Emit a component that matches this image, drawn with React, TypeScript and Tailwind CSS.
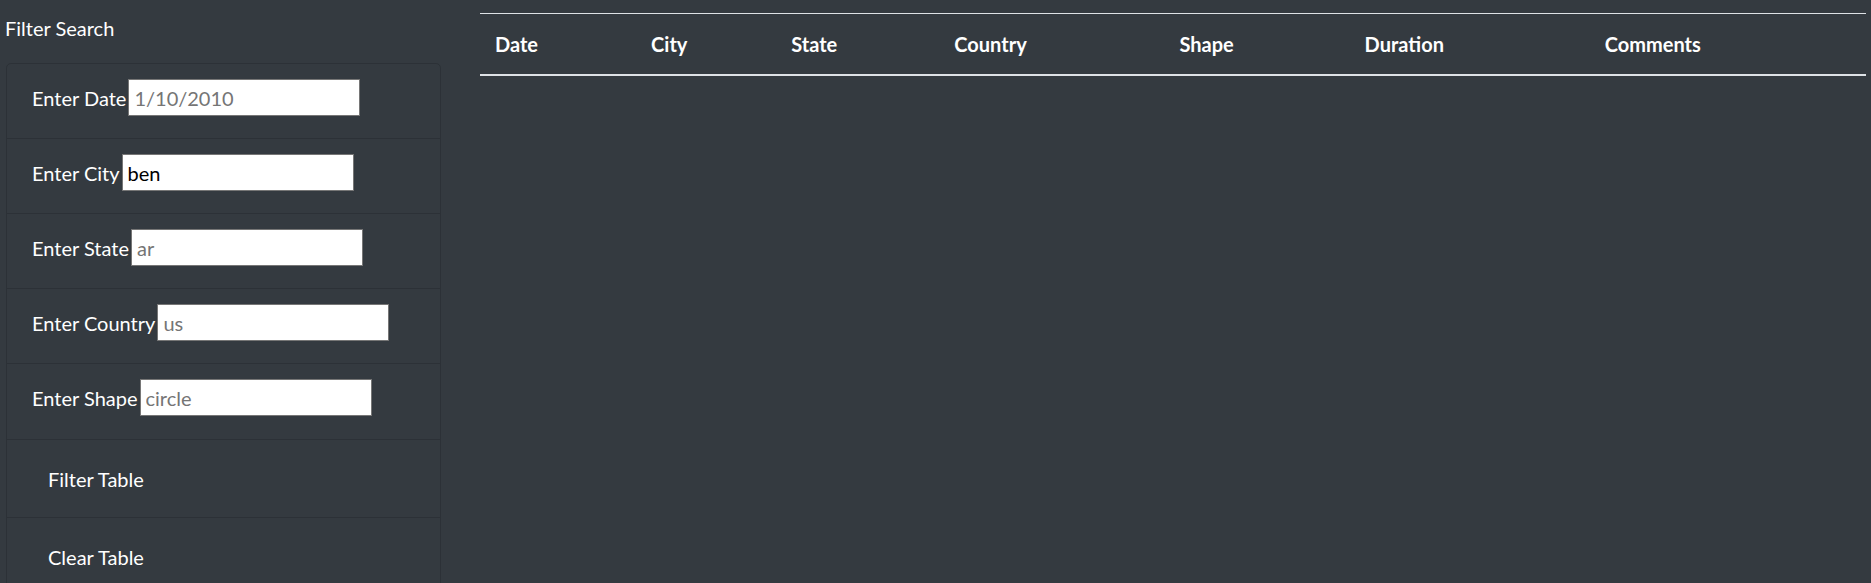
import React from 'react';

/* ── Filter fields ── */

type Field = { label: string; placeholder?: string; value?: string; rowH: string };

const fields: Field[] = [
  { label: 'Enter Date', placeholder: '1/10/2010', rowH: 'h-[75px]' },
  { label: 'Enter City', value: 'ben', rowH: 'h-[75px]' },
  { label: 'Enter State', placeholder: 'ar', rowH: 'h-[75px]' },
  { label: 'Enter Country', placeholder: 'us', rowH: 'h-[75px]' },
  { label: 'Enter Shape', placeholder: 'circle', rowH: 'h-[76px]' },
];

const columns = [
  { name: 'Date', w: 'w-[156px]' },
  { name: 'City', w: 'w-[140px]' },
  { name: 'State', w: 'w-[163px]' },
  { name: 'Country', w: 'w-[225px]' },
  { name: 'Shape', w: 'w-[185px]' },
  { name: 'Duration', w: 'w-[240px]' },
  { name: 'Comments', w: 'w-[276px]' },
];

export default function App() {
  return (
    <div className="min-h-screen bg-[#343a40] text-white font-['Lato','Open_Sans',sans-serif] text-[20px] leading-[30px] flex">
      {/* ── Sidebar ── */}
      <aside className="w-[441px] shrink-0 pt-[13px]">
        <h5 className="pl-[5px]">Filter Search</h5>
        <ul className="ml-[6px] mt-[20px] w-[435px] border border-black/[0.14] rounded-[5px]">
          {fields.map((f) => (
            <li
              key={f.label}
              className={`${f.rowH} flex items-start pt-[15px] pl-[25px] border-b border-black/[0.14]`}
            >
              <label className="flex items-center gap-[2px]">
                <span>{f.label}</span>
                <input
                  type="text"
                  placeholder={f.placeholder}
                  defaultValue={f.value}
                  className="w-[232px] h-[37px] bg-white text-black border border-[#767676] pl-[5px] outline-none placeholder:text-[#757575]"
                />
              </label>
            </li>
          ))}
          <li className="h-[78px] flex items-center pl-[25px] border-b border-black/[0.14]">
            <button className="px-[16px] py-[8px]">Filter Table</button>
          </li>
          <li className="h-[78px] flex items-center pl-[25px]">
            <button className="px-[16px] py-[8px]">Clear Table</button>
          </li>
        </ul>
      </aside>

      {/* ── Table ── */}
      <main className="flex-1 pt-[13px] pl-[39px] pr-[5px]">
        <table className="w-full table-fixed border-collapse">
          <thead>
            <tr className="border-t border-b-2 border-[#dee2e6]">
              {columns.map((c) => (
                <th key={c.name} className={`${c.w} text-left font-bold px-[15px] py-[15px]`}>
                  {c.name}
                </th>
              ))}
            </tr>
          </thead>
          <tbody />
        </table>
      </main>
    </div>
  );
}
